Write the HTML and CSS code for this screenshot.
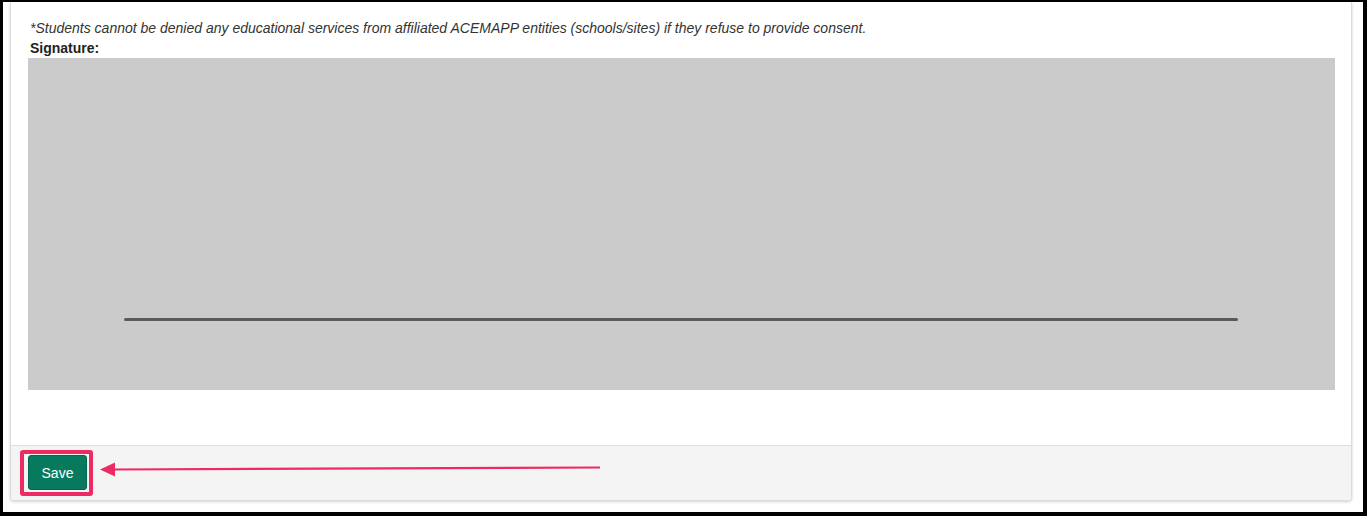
FILE: index.html
```html
<!DOCTYPE html>
<html>
<head>
<meta charset="utf-8">
<link rel="stylesheet" href="styles.css">
</head>
<body>
<div class="frame">
  <div class="card">
    <div class="card-body">
      <p class="note">*Students cannot be denied any educational services from affiliated ACEMAPP entities (schools/sites) if they refuse to provide consent.</p>
      <div class="label">Signature:</div>
      <div class="sigpad"><div class="sigline"></div></div>
    </div>
    <div class="card-footer">
      <button class="btn-save" type="button">Save</button>
      <div class="highlight"></div>
      <svg class="arrow" width="506" height="22" viewBox="0 0 506 22">
        <line x1="14" y1="10.5" x2="500" y2="8.5" stroke="#ec2b62" stroke-width="2.2"/>
        <polygon points="0,10.6 15,3.6 15,17.6" fill="#ec2b62"/>
      </svg>
    </div>
  </div>
</div>
</body>
</html>
```
FILE: styles.css
```css
html, body {
  margin: 0;
  padding: 0;
  background: #fff;
}
.frame {
  width: 1367px;
  height: 516px;
  box-sizing: border-box;
  border-style: solid;
  border-color: #000;
  border-width: 2px 4px 4px 3px;
  overflow: hidden;
  font-family: "Liberation Sans", Arial, sans-serif;
  color: #333;
}
.card {
  margin: 0 11px 0 7px;
  border: 1px solid #dcdcdc;
  border-top: none;
  border-radius: 0 0 4px 4px;
  box-shadow: 0 1px 3px rgba(0, 0, 0, 0.18);
  background: #fff;
}
.card-body {
  padding: 16px 16px 55px 17px;
}
.note {
  margin: 0;
  font-size: 14px;
  line-height: 20px;
  font-style: italic;
  padding-left: 2px;
}
.label {
  font-size: 14px;
  line-height: 20px;
  font-weight: bold;
  color: #222;
  padding-left: 2px;
}
.sigpad {
  height: 332px;
  box-sizing: border-box;
  background: #cbcbcb;
  display: flex;
  flex-direction: column;
  justify-content: flex-end;
  padding: 0 97px 69px 96px;
}
.sigline {
  height: 3px;
  border-radius: 2px;
  background: #5a5a5a;
}
.card-footer {
  position: relative;
  border-top: 1px solid #dedede;
  background: #f4f4f4;
  padding: 9px 17px 10px;
  border-radius: 0 0 4px 4px;
  display: flex;
}
.btn-save {
  width: 59px;
  height: 35px;
  box-sizing: border-box;
  background: #077a5e;
  border: 1px solid #05664e;
  border-radius: 3px;
  color: #fff;
  font-family: "Liberation Sans", Arial, sans-serif;
  font-size: 14px;
  padding: 0;
}
.highlight {
  position: absolute;
  left: 9px;
  top: 4px;
  width: 73px;
  height: 46px;
  box-sizing: border-box;
  border: 4px solid #ec2b62;
  border-radius: 3px;
}
.arrow {
  position: absolute;
  left: 89px;
  top: 13px;
}
```
